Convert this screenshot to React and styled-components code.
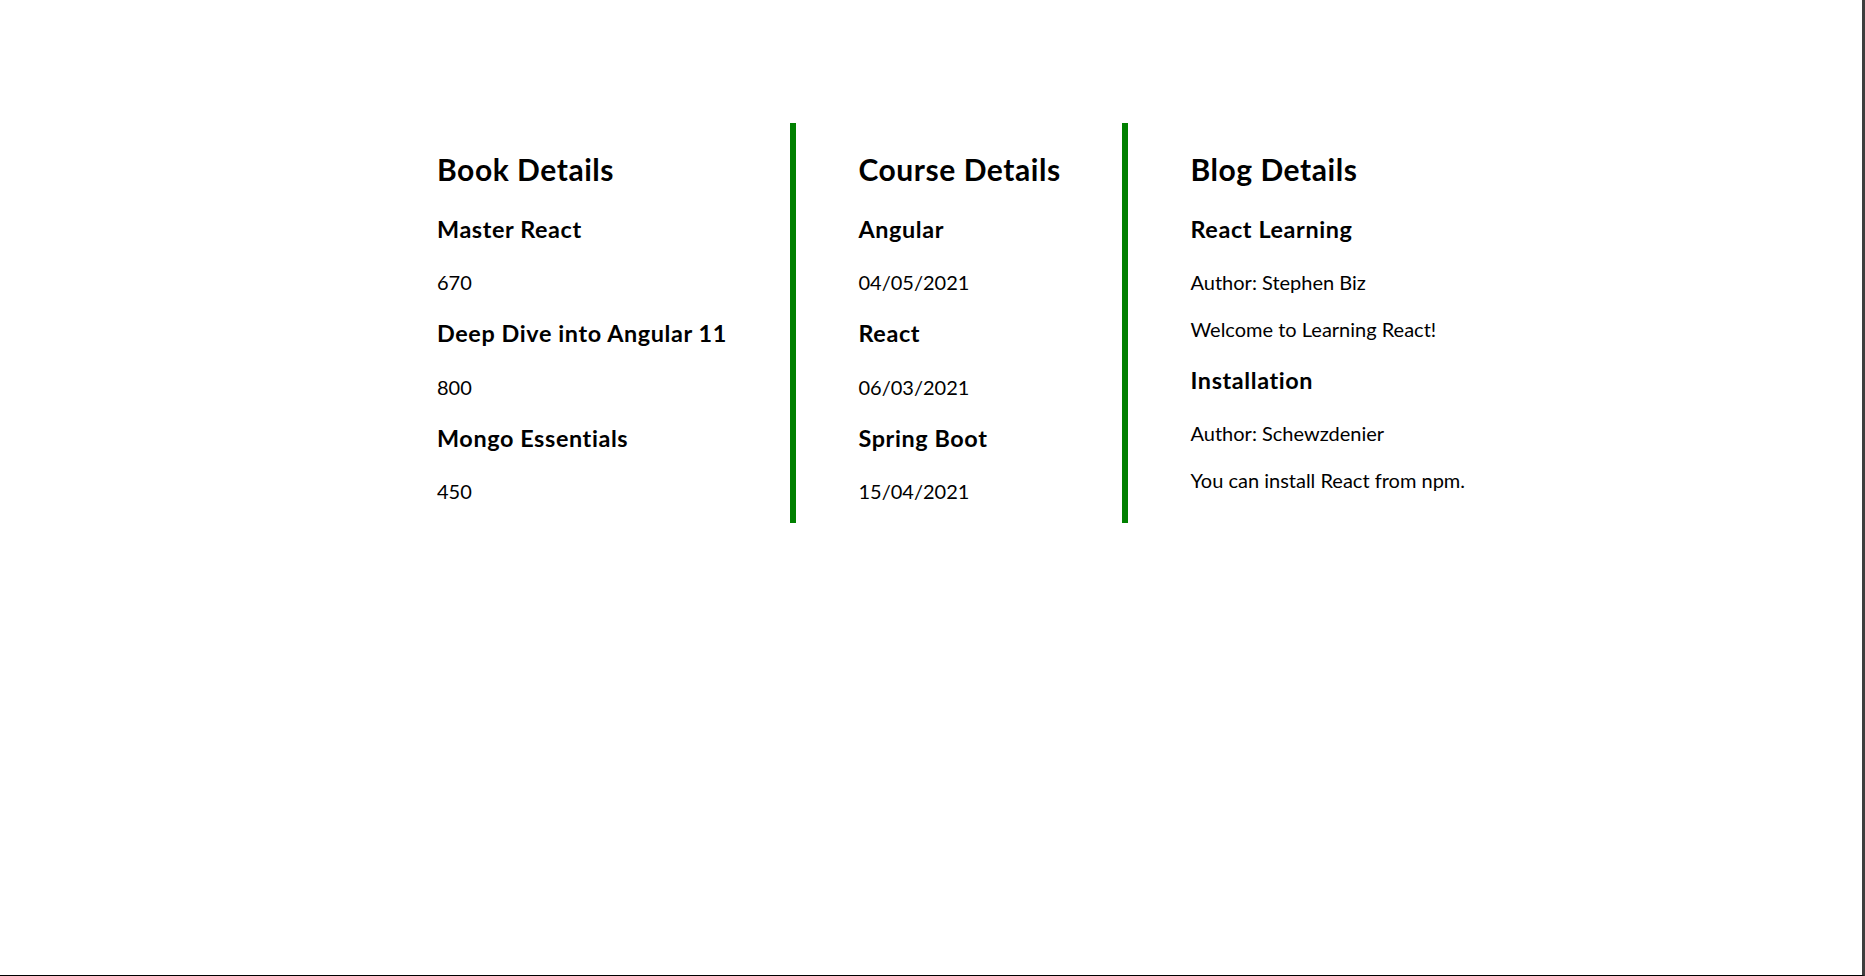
import React from "react";
import styled, { createGlobalStyle } from "styled-components";

const GlobalStyle = createGlobalStyle`
  html, body {
    margin: 0;
    padding: 0;
    background: #ffffff;
  }

  body {
    font-family: Lato, "Open Sans", "Noto Sans", sans-serif;
    font-variant-ligatures: none;
    color: #000000;
  }
`;

const Frame = styled.div`
  box-sizing: border-box;
  height: 100vh;
  border-right: 3px solid #3e3e3e;
  border-bottom: 1px solid #000000;
  padding: 123px 0 0 374.5px;
`;

const Columns = styled.div`
  display: flex;
  align-items: stretch;
`;

const Column = styled.div`
  box-sizing: border-box;
  width: ${(p) => (p.$width ? `${p.$width}px` : "auto")};
  padding: 0 62.5px;
  border-left: ${(p) => (p.$divider ? "6px solid #008000" : "none")};
`;

// padding-top + shorter line-height keeps each box height but drops the baseline a bit
const Title = styled.h2`
  font-size: 30px;
  line-height: 38px;
  padding-top: 2px;
  font-weight: 700;
  letter-spacing: 0.55px;
  margin: 25px 0;
  white-space: nowrap;
`;

const ItemName = styled.h3`
  font-size: 23.4px;
  line-height: 29px;
  padding-top: 2px;
  font-weight: 700;
  letter-spacing: 0.6px;
  margin: 23.4px 0;
  white-space: nowrap;
`;

const Text = styled.p`
  font-size: 20px;
  line-height: 22.6px;
  padding-top: 4px;
  margin: 20px 0;
  white-space: nowrap;
`;

const books = [
  { id: 1, name: "Master React", price: 670 },
  { id: 2, name: "Deep Dive into Angular 11", price: 800 },
  { id: 3, name: "Mongo Essentials", price: 450 },
];

const courses = [
  { id: 1, name: "Angular", date: "04/05/2021" },
  { id: 2, name: "React", date: "06/03/2021" },
  { id: 3, name: "Spring Boot", date: "15/04/2021" },
];

const blogs = [
  {
    id: 1,
    title: "React Learning",
    author: "Stephen Biz",
    content: "Welcome to Learning React!",
  },
  {
    id: 2,
    title: "Installation",
    author: "Schewzdenier",
    content: "You can install React from npm.",
  },
];

function BookDetails() {
  return (
    <Column $width={415.5}>
      <Title>Book Details</Title>
      {books.map((b) => (
        <div key={b.id}>
          <ItemName>{b.name}</ItemName>
          <Text>{b.price}</Text>
        </div>
      ))}
    </Column>
  );
}

function CourseDetails() {
  return (
    <Column $width={332} $divider>
      <Title>Course Details</Title>
      {courses.map((c) => (
        <div key={c.id}>
          <ItemName>{c.name}</ItemName>
          <Text>{c.date}</Text>
        </div>
      ))}
    </Column>
  );
}

function BlogDetails() {
  return (
    <Column $divider>
      <Title>Blog Details</Title>
      {blogs.map((b) => (
        <div key={b.id}>
          <ItemName>{b.title}</ItemName>
          <Text>Author: {b.author}</Text>
          <Text>{b.content}</Text>
        </div>
      ))}
    </Column>
  );
}

export default function App() {
  return (
    <>
      <GlobalStyle />
      <Frame>
        <Columns>
          <BookDetails />
          <CourseDetails />
          <BlogDetails />
        </Columns>
      </Frame>
    </>
  );
}
